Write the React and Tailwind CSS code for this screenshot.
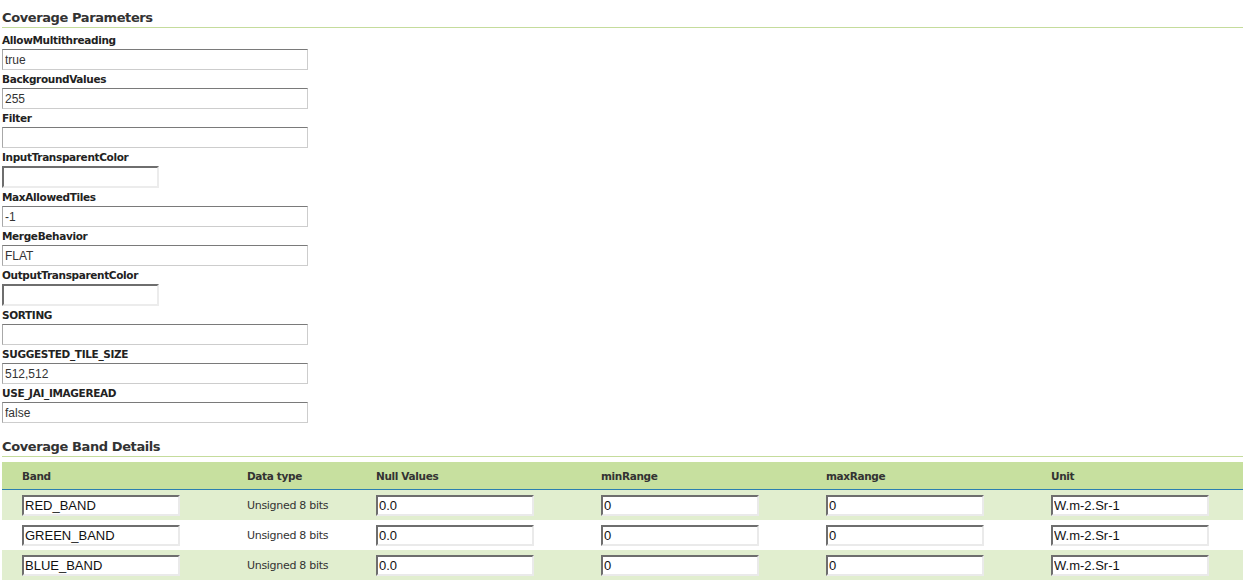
import React from 'react'

const params = [
  { name: 'AllowMultithreading', value: 'true' },
  { name: 'BackgroundValues', value: '255' },
  { name: 'Filter', value: '' },
  { name: 'InputTransparentColor', value: '', color: true },
  { name: 'MaxAllowedTiles', value: '-1' },
  { name: 'MergeBehavior', value: 'FLAT' },
  { name: 'OutputTransparentColor', value: '', color: true },
  { name: 'SORTING', value: '' },
  { name: 'SUGGESTED_TILE_SIZE', value: '512,512' },
  { name: 'USE_JAI_IMAGEREAD', value: 'false' },
]

const bands = ['RED_BAND', 'GREEN_BAND', 'BLUE_BAND']

const tahoma = { fontFamily: '"DejaVu Sans", Verdana, sans-serif' }
const arial = { fontFamily: '"Liberation Sans", Arial, sans-serif' }

function Heading({ children }) {
  return (
    <h2
      style={tahoma}
      className="h-[19px] border-b border-[#c5dc9c] text-[13px] font-bold leading-[18px] tracking-[-0.4px] text-[#333]"
    >
      {children}
    </h2>
  )
}

function ParamField({ name, value, color }) {
  return (
    <div>
      <div style={tahoma} className="h-[18px] text-[10.5px] font-bold leading-[18px] tracking-[-0.35px] text-[#222]">
        {name}
      </div>
      {color ? (
        <input
          readOnly
          value={value}
          className="block h-[22px] w-[157px] border-2 border-t-[#6e6e6e] border-l-[#6e6e6e] border-r-[#ececec] border-b-[#ececec] bg-white"
        />
      ) : (
        <input
          readOnly
          value={value}
          style={arial}
          className="block h-[21px] w-[306px] border border-t-[#7a7a7a] border-l-[#a8a8a8] border-r-[#cdcdcd] border-b-[#cdcdcd] bg-white px-[2px] text-[12px] text-[#333]"
        />
      )}
    </div>
  )
}

function CellInput({ value }) {
  return (
    <input
      readOnly
      value={value}
      style={arial}
      className="block h-[21px] w-[158px] border-2 border-t-[#6e6e6e] border-l-[#6e6e6e] border-r-[#eaeaea] border-b-[#eaeaea] bg-white px-[1px] text-[13px] text-[#111]"
    />
  )
}

export default function App() {
  return (
    <div className="min-h-screen bg-white pl-[2px] pt-[9px]">
      <Heading>Coverage Parameters</Heading>
      <div className="mt-[3px]">
        {params.map((p) => (
          <ParamField key={p.name} {...p} />
        ))}
      </div>

      <div className="mt-[15px]">
        <Heading>Coverage Band Details</Heading>
      </div>

      <div className="mt-[5px]">
        <div
          style={tahoma}
          className="grid h-[28px] grid-cols-[225px_129px_225px_225px_225px_1fr] items-center border-b border-[#2b7fb0] bg-[#c7e09f] text-[10.5px] font-bold tracking-[-0.35px] text-[#333]"
        >
          {['Band', 'Data type', 'Null Values', 'minRange', 'maxRange', 'Unit'].map((h) => (
            <div key={h} className="pl-[20px] pt-[2px]">{h}</div>
          ))}
        </div>
        {bands.map((b, i) => (
          <div
            key={b}
            className={`grid h-[30px] grid-cols-[225px_129px_225px_225px_225px_1fr] items-center ${i % 2 === 0 ? 'bg-[#e1eecf]' : 'bg-white'}`}
          >
            <div className="pl-[20px]"><CellInput value={b} /></div>
            <div style={tahoma} className="pl-[20px] pt-[2px] text-[11px] tracking-[-0.3px] text-[#333]">Unsigned 8 bits</div>
            <div className="pl-[20px]"><CellInput value="0.0" /></div>
            <div className="pl-[20px]"><CellInput value="0" /></div>
            <div className="pl-[20px]"><CellInput value="0" /></div>
            <div className="pl-[20px]"><CellInput value="W.m-2.Sr-1" /></div>
          </div>
        ))}
      </div>
    </div>
  )
}
